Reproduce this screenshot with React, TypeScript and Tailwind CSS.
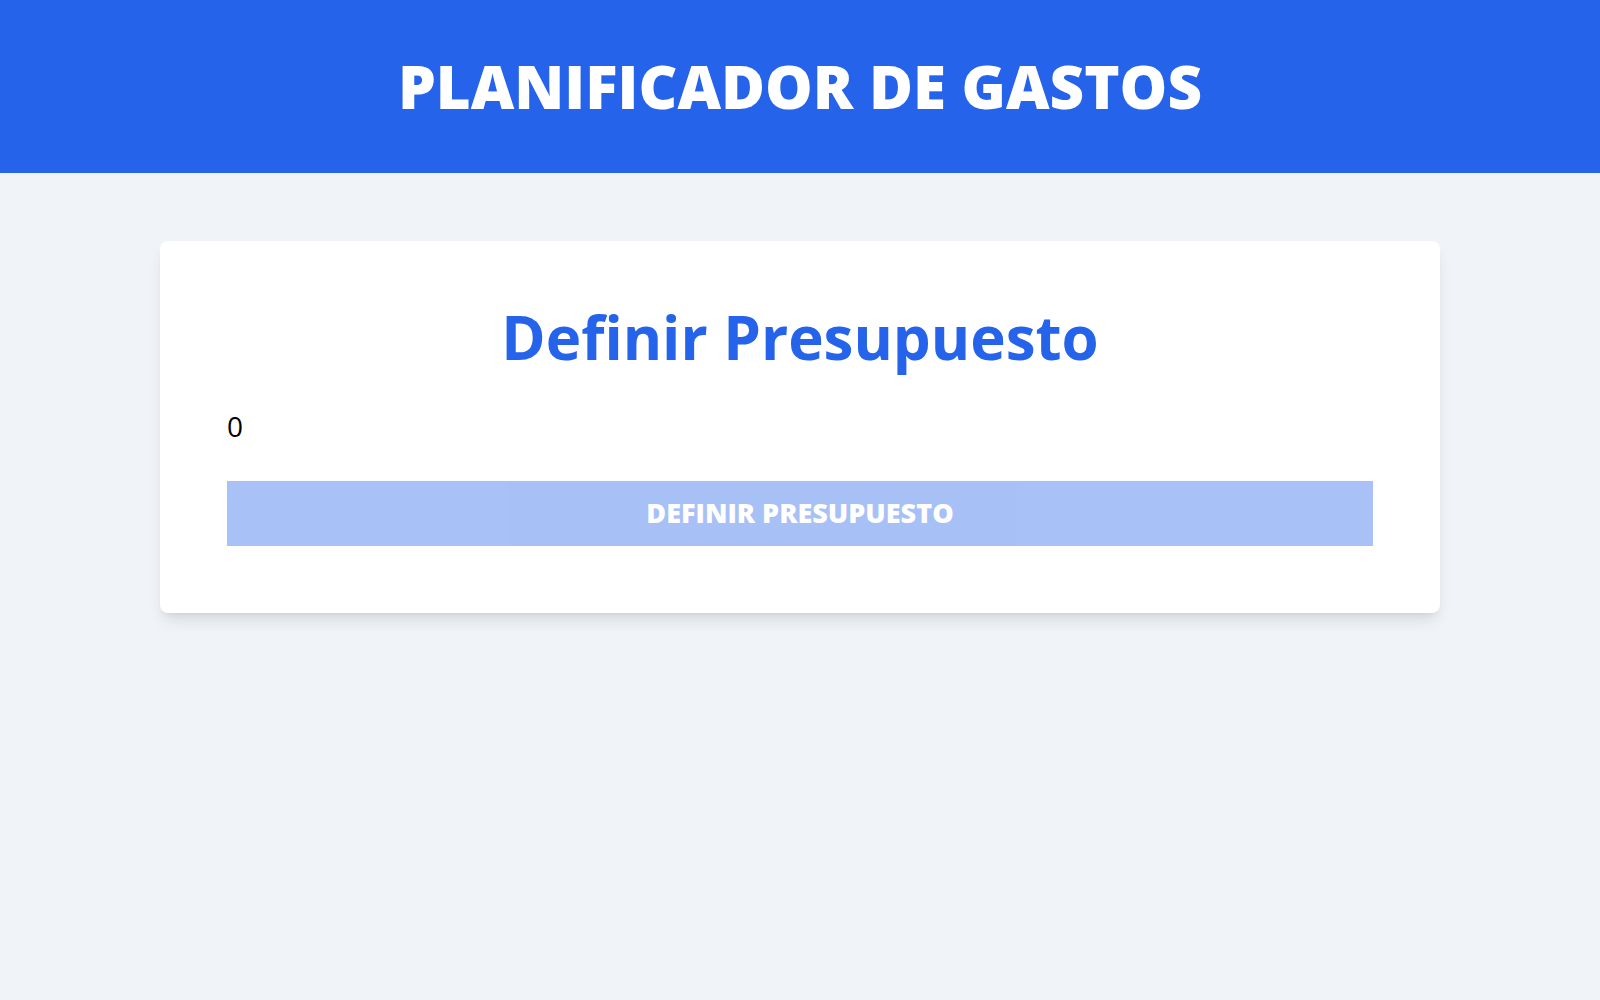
import { useState } from 'react'

export default function App() {
  const [budget, setBudget] = useState('0')

  return (
    <div className="min-h-screen bg-[#f0f4f8] font-['Open_Sans',sans-serif]">
      <header className="h-[173px] bg-[#2563eb] flex items-center justify-center">
        <h1 className="text-white text-[60px] leading-none font-extrabold tracking-normal -mt-[2px]">PLANIFICADOR DE GASTOS</h1>
      </header>

      <main className="max-w-[1280px] mx-auto mt-[68px]">
        <form
          className="bg-white rounded-lg shadow-lg px-[67px] pt-[66px] pb-[67px] flex flex-col"
          onSubmit={(e) => e.preventDefault()}
        >
          <h2 className="text-center text-[#2563eb] text-[60px] leading-none font-bold">Definir Presupuesto</h2>
          <input
            type="number"
            value={budget}
            onChange={(e) => setBudget(e.target.value)}
            className="mt-[40px] w-full text-[28px] leading-none text-black font-normal outline-none bg-transparent"
          />
          <button
            type="submit"
            className="mt-[36px] h-[65px] w-full bg-[#2563eb] opacity-40 text-white text-[27px] font-extrabold uppercase"
          >
            Definir Presupuesto
          </button>
        </form>
      </main>
    </div>
  )
}
